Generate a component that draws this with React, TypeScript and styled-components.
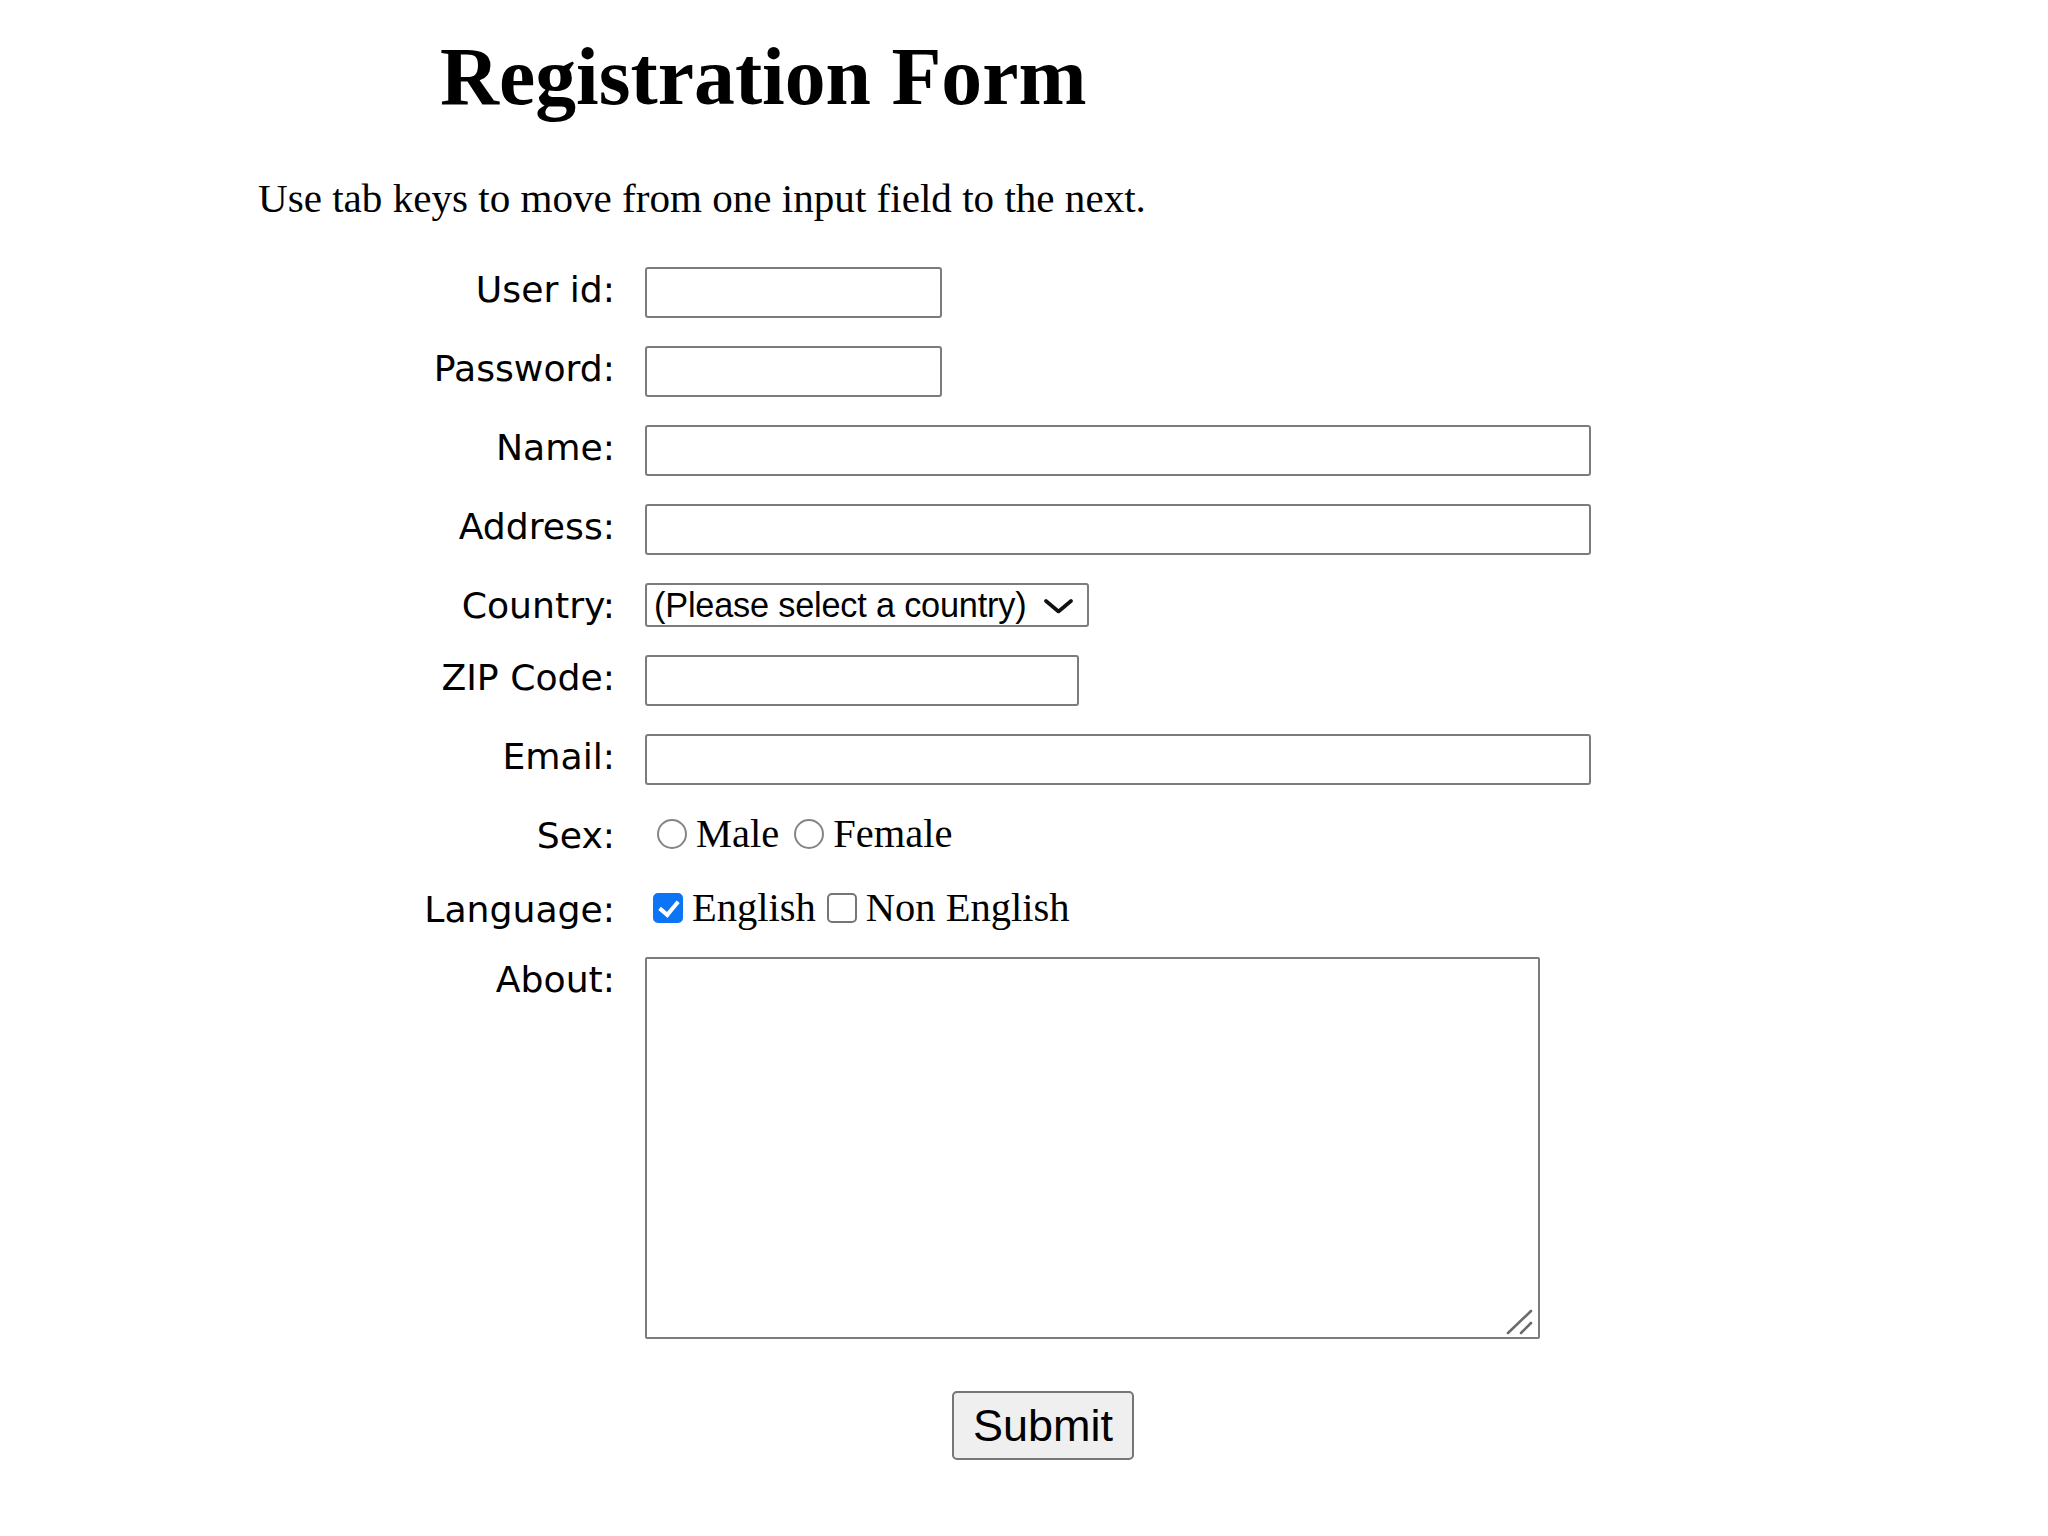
import React from "react";
import styled, { createGlobalStyle } from "styled-components";

const GlobalStyle = createGlobalStyle`
  html, body {
    margin: 0;
    padding: 0;
    background: #ffffff;
  }
  * { box-sizing: border-box; }
`;

const Page = styled.div`
  padding: 31px 0 40px 258px;
  color: #000;
  font-family: "Liberation Serif", "Times New Roman", serif;
`;

const Title = styled.h1`
  margin: 0 0 0 182px;
  font-family: "Liberation Serif", "Times New Roman", serif;
  font-weight: bold;
  font-size: 81.7px;
  line-height: 92px;
`;

const Intro = styled.p`
  margin: 52px 0 0 0;
  font-size: 41.1px;
  line-height: 46px;
`;

const Form = styled.form`
  margin: 46px 0 0 112px;
  display: flex;
  flex-direction: column;
`;

const Row = styled.div<{ $after?: number }>`
  display: flex;
  align-items: flex-start;
  margin-bottom: ${(p) => (p.$after ?? 28)}px;
`;

const Label = styled.label`
  width: 245px;
  flex: none;
  margin-right: 30px;
  padding-top: 2px;
  text-align: right;
  font-family: "DejaVu Sans", Verdana, sans-serif;
  font-size: 36.2px;
  line-height: 41px;
  color: #000;
`;

const TextInput = styled.input<{ $w: number }>`
  width: ${(p) => p.$w}px;
  height: 51px;
  border: 2px solid #7c7c7c;
  border-radius: 3px;
  background: #fff;
  padding: 0 6px;
  font-family: "Liberation Sans", Arial, sans-serif;
  font-size: 33px;
  outline: none;
`;

const SelectWrap = styled.div`
  position: relative;
  width: 444px;
  height: 44px;
`;

const Select = styled.select`
  appearance: none;
  -webkit-appearance: none;
  width: 100%;
  height: 100%;
  border: 2px solid #7c7c7c;
  border-radius: 3px;
  background: #fff;
  color: #000;
  padding: 0 0 0 7px;
  font-family: "Liberation Sans", Arial, sans-serif;
  font-size: 34.3px;
  letter-spacing: -0.2px;
  outline: none;
`;

const Chevron = styled.svg`
  position: absolute;
  right: 16px;
  top: 15px;
  width: 29px;
  height: 16px;
  pointer-events: none;
`;

const ChoiceGroup = styled.div`
  display: flex;
  align-items: center;
  height: 41px;
  font-family: "Liberation Serif", "Times New Roman", serif;
  font-size: 40.5px;
  line-height: 41px;
  white-space: pre;
`;

const Radio = styled.input.attrs({ type: "radio" })<{ $ml: number }>`
  appearance: none;
  -webkit-appearance: none;
  width: 30px;
  height: 30px;
  margin: 0 9px 0 ${(p) => p.$ml}px;
  flex: none;
  border: 2px solid #858585;
  border-radius: 50%;
  background: #fff;
`;

const Check = styled.input.attrs({ type: "checkbox" })<{ $ml: number }>`
  appearance: none;
  -webkit-appearance: none;
  position: relative;
  width: 30px;
  height: 30px;
  margin: 0 9px 0 ${(p) => p.$ml}px;
  flex: none;
  border: 2px solid #767676;
  border-radius: 5px;
  background: #fff;

  &:checked {
    background: #0b75f5;
    border-color: #0b75f5;
  }

  &:checked::after {
    content: "";
    position: absolute;
    left: 8px;
    top: 2px;
    width: 8px;
    height: 15px;
    border-right: 4px solid #fff;
    border-bottom: 4px solid #fff;
    transform: rotate(40deg);
  }
`;

const AreaWrap = styled.div`
  position: relative;
  width: 895px;
  height: 382px;
`;

const TextArea = styled.textarea`
  width: 100%;
  height: 100%;
  border: 2px solid #7c7c7c;
  border-radius: 2px;
  resize: none;
  outline: none;
  display: block;
`;

const Grip = styled.svg`
  position: absolute;
  right: 6px;
  bottom: 4px;
  width: 28px;
  height: 28px;
  pointer-events: none;
`;

const Submit = styled.button`
  margin: 52px 0 0 582px;
  width: 182px;
  height: 69px;
  align-self: flex-start;
  background: #efefef;
  border: 2px solid #767676;
  border-radius: 5px;
  font-family: "Liberation Sans", Arial, sans-serif;
  font-size: 45px;
  color: #000;
  padding: 0;
`;

export default function App() {
  return (
    <>
      <GlobalStyle />
      <Page>
        <Title>Registration Form</Title>
        <Intro>Use tab keys to move from one input field to the next.</Intro>
        <Form onSubmit={(e) => e.preventDefault()}>
          <Row>
            <Label htmlFor="userid">User id:</Label>
            <TextInput id="userid" type="text" $w={297} />
          </Row>
          <Row>
            <Label htmlFor="passid">Password:</Label>
            <TextInput id="passid" type="password" $w={297} />
          </Row>
          <Row>
            <Label htmlFor="username">Name:</Label>
            <TextInput id="username" type="text" $w={946} />
          </Row>
          <Row>
            <Label htmlFor="address">Address:</Label>
            <TextInput id="address" type="text" $w={946} />
          </Row>
          <Row>
            <Label htmlFor="country">Country:</Label>
            <SelectWrap>
              <Select id="country" defaultValue="Default">
                <option value="Default">(Please select a country)</option>
                <option value="AU">Australia</option>
                <option value="CA">Canada</option>
                <option value="IN">India</option>
                <option value="RU">Russia</option>
                <option value="US">USA</option>
              </Select>
              <Chevron viewBox="0 0 29 16">
                <polyline
                  points="2,3 14.5,13.5 27,3"
                  fill="none"
                  stroke="#111"
                  strokeWidth="3.6"
                  strokeLinecap="round"
                  strokeLinejoin="round"
                />
              </Chevron>
            </SelectWrap>
          </Row>
          <Row>
            <Label htmlFor="zip">ZIP Code:</Label>
            <TextInput id="zip" type="text" $w={434} />
          </Row>
          <Row>
            <Label htmlFor="email">Email:</Label>
            <TextInput id="email" type="text" $w={946} />
          </Row>
          <Row $after={31}>
            <Label>Sex:</Label>
            <ChoiceGroup>
              <Radio name="sex" value="Male" $ml={12} />
              <span>Male </span>
              <Radio name="sex" value="Female" $ml={5} />
              <span>Female</span>
            </ChoiceGroup>
          </Row>
          <Row $after={27}>
            <Label>Language:</Label>
            <ChoiceGroup>
              <Check name="en" value="en" defaultChecked $ml={8} />
              <span>English</span>
              <Check name="nonen" value="noen" $ml={11} />
              <span>Non English</span>
            </ChoiceGroup>
          </Row>
          <Row $after={0}>
            <Label htmlFor="desc">About:</Label>
            <AreaWrap>
              <TextArea id="desc" name="desc" />
              <Grip viewBox="0 0 28 28">
                <line x1="2" y1="26" x2="25" y2="4" stroke="#6b6b6b" strokeWidth="2.6" strokeLinecap="round" />
                <line x1="15" y1="26" x2="25" y2="16" stroke="#6b6b6b" strokeWidth="2.6" strokeLinecap="round" />
              </Grip>
            </AreaWrap>
          </Row>
          <Submit type="submit">Submit</Submit>
        </Form>
      </Page>
    </>
  );
}
